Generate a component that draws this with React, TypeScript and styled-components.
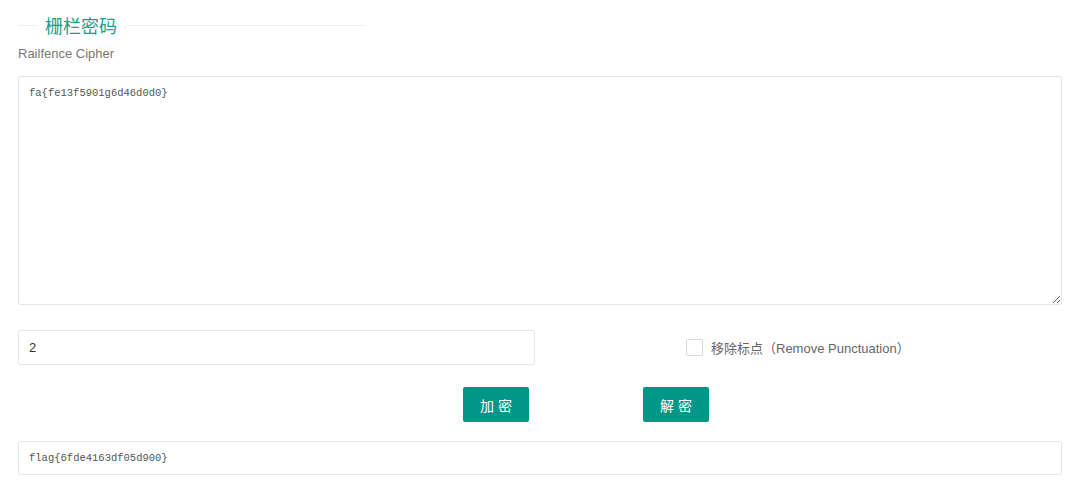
import React, { useState } from 'react'
import styled, { createGlobalStyle } from 'styled-components'

const GlobalStyle = createGlobalStyle`
	html, body {
		margin: 0;
		padding: 0;
		background: #fff;
	}
	body {
		font-family: "Liberation Sans", "Noto Sans CJK SC", sans-serif;
		color: #333;
	}
`

const Page = styled.div`
	width: 1044px;
	padding: 12px 18px 0;
	display: flex;
	flex-direction: column;
`

const TitleRow = styled.div`
	width: 347px;
	height: 26px;
	display: flex;
	align-items: center;
`

const Rule = styled.div<{ $grow?: boolean }>`
	height: 1px;
	background: #eeeeee;
	width: 18px;
	flex: ${({ $grow }) => ($grow ? 1 : 'none')};
`

const Title = styled.h2`
	margin: 0;
	padding: 0 9px;
	font-size: 18px;
	font-weight: normal;
	line-height: 26px;
	color: #1c9e8b;
	font-family: "Noto Sans CJK SC", sans-serif;
`

const Subtitle = styled.div`
	margin-top: 7px;
	font-size: 13px;
	line-height: 18px;
	color: #777;
`

const TextArea = styled.textarea`
	box-sizing: border-box;
	margin-top: 13px;
	width: 100%;
	height: 229px;
	border: 1px solid #e6e6e6;
	border-radius: 2px;
	padding: 8px 10px;
	font-family: "Liberation Mono", monospace;
	font-size: 10.5px;
	line-height: 16px;
	color: #555;
	outline: none;
	resize: vertical;
	display: block;
`

const OptionsRow = styled.div`
	margin-top: 25px;
	display: grid;
	grid-template-columns: 517px 1fr;
	align-items: center;
`

const Input = styled.input`
	box-sizing: border-box;
	height: 35px;
	width: 100%;
	border: 1px solid #e6e6e6;
	border-radius: 2px;
	padding: 0 10px;
	font-family: "Liberation Sans", sans-serif;
	font-size: 13px;
	color: #333;
	outline: none;
`

const CheckLabel = styled.label`
	display: flex;
	align-items: center;
	gap: 8px;
	padding-left: 151px;
	font-size: 13px;
	color: #666;
	cursor: pointer;
	font-family: "Liberation Sans", "Noto Sans CJK SC", sans-serif;
`

const Box = styled.span`
	box-sizing: border-box;
	width: 17px;
	height: 17px;
	border: 1px solid #d9d9d9;
	border-radius: 2px;
	background: #fff;
`

const Buttons = styled.div`
	margin-top: 22px;
	padding-left: 445px;
	display: flex;
	gap: 114px;
`

const Button = styled.button`
	width: 66px;
	height: 35px;
	border: none;
	border-radius: 2px;
	background: #009688;
	color: #fff;
	font-size: 14px;
	letter-spacing: 4px;
	padding: 0 0 0 4px;
	font-family: "Noto Sans CJK SC", sans-serif;
	cursor: pointer;
`

const Output = styled.div`
	box-sizing: border-box;
	margin-top: 19px;
	height: 34px;
	border: 1px solid #e6e6e6;
	border-radius: 2px;
	padding: 0 10px;
	display: flex;
	align-items: center;
	font-family: "Liberation Mono", monospace;
	font-size: 10.5px;
	color: #555;
`

const App = () => {
	const [text, setText] = useState('fa{fe13f5901g6d46d0d0}')
	const [key, setKey] = useState('2')

	return (
		<>
			<GlobalStyle />
			<Page>
				<TitleRow>
					<Rule />
					<Title>栅栏密码</Title>
					<Rule $grow />
				</TitleRow>
				<Subtitle>Railfence Cipher</Subtitle>
				<TextArea value={text} onChange={e => setText(e.target.value)} />
				<OptionsRow>
					<Input value={key} onChange={e => setKey(e.target.value)} />
					<CheckLabel>
						<Box />
						移除标点（Remove Punctuation）
					</CheckLabel>
				</OptionsRow>
				<Buttons>
					<Button>加密</Button>
					<Button>解密</Button>
				</Buttons>
				<Output>flag{'{'}6fde4163df05d900{'}'}</Output>
			</Page>
		</>
	)
}

export default App
